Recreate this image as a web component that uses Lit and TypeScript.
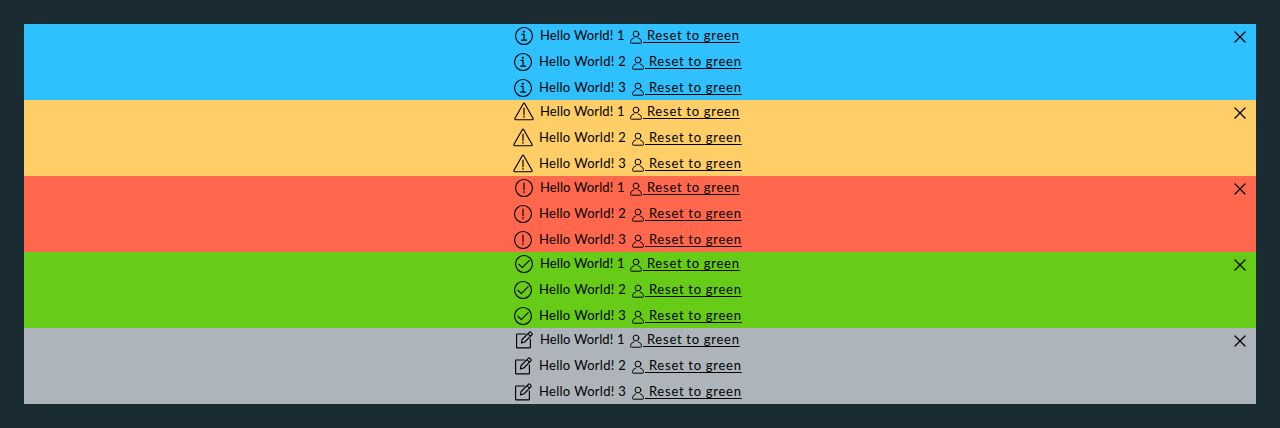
import { LitElement, html, css, svg } from "lit";
import { customElement } from "lit/decorators.js";

const shapes: Record<string, unknown> = {
  info: svg`<circle cx="10" cy="10" r="8.5"/><path d="M8 8.4h2.1v5.7M7.6 14.1h5" /><circle cx="9.8" cy="5.7" r=".75" fill="currentColor" stroke-width=".6"/>`,
  warning: svg`<path d="M9.4 1.5 1 16.2q-.7 1.5.9 1.5h16.2q1.6 0 .9-1.5L10.6 1.5q-.6-.8-1.2 0Z"/><path d="M10 6.1v6.6M10 14.2v1"/>`,
  danger: svg`<circle cx="10" cy="10" r="8.5"/><path d="M10 5v6.8M10 13.6v1"/>`,
  success: svg`<circle cx="10" cy="10" r="8.5"/><path d="m4.8 10.1 3.5 3.5 6.9-6.9"/>`,
  note: svg`<path d="M11.4 4H3.2q-.6 0-.6.6v12.6q0 .6.6.6h12.6q.6 0 .6-.6V9"/><path d="m7.4 12.9.7-3.4 7.2-7.2q.8-.8 1.6 0l1 1q.8.8 0 1.6L10.8 12l-3.4.9ZM14 3.7l2.5 2.5"/>`,
};

@customElement("app-root")
export class AppRoot extends LitElement {
  static styles = css`
    :host {
      display: block;
      box-sizing: border-box;
      height: 428px;
      padding: 24px;
      background: #1b2b32;
      color: #000;
      font: 13px/22px Lato, sans-serif;
      overflow: hidden;
    }
    .banner {
      display: grid;
      grid-template-columns: 32px 1fr 32px;
      height: 76px;
    }
    .info { background: #2ec0ff; }
    .warning { background: #ffce66; }
    .danger { background: #ff684c; }
    .success { background: #67cc17; }
    .note { background: #adb5bb; }
    .list {
      grid-column: 2;
      display: flex;
      flex-direction: column;
      align-items: center;
      gap: 2px;
      padding-right: 24px;
    }
    .row {
      display: flex;
      box-sizing: border-box;
      width: 230px;
      height: 24px;
      white-space: pre;
    }
    .row:first-child { width: 228px; }
    svg {
      fill: none;
      stroke: currentColor;
      stroke-linecap: round;
      stroke-linejoin: round;
      flex: none;
    }
    .status { width: 20px; height: 20px; margin: 2px 6px 0 0; stroke-width: 1.15; }
    .message { width: 92px; letter-spacing: 0.28px; word-spacing: 0.2px; }
    .row:first-child .message { width: 89px; letter-spacing: 0.1px; }
    .user { width: 14px; height: 14px; margin: 6px 0 0; stroke-width: 1; }
    .link {
      letter-spacing: 0.76px;
      word-spacing: -0.2px;
      color: inherit;
      text-decoration: underline;
      text-underline-offset: 2px;
      text-decoration-thickness: 1px;
    }
    .close {
      grid-column: 3;
      width: 32px;
      height: 26px;
      padding: 0;
      border: 0;
      background: none;
      color: inherit;
    }
    .close svg { display: block; width: 14px; height: 14px; margin: 0 9px; stroke-width: 1.3; }
  `;

  private banner(kind: string) {
    return html`<section class="banner ${kind}">
      <div class="list">
        ${[1, 2, 3].map(
          (n) => html`<div class="row"><svg class="status" viewBox="0 0 20 20">${shapes[kind]}</svg><span class="message">Hello World! ${n}</span><svg class="user" viewBox="0 0 14 14"><circle cx="7" cy="4" r="2.9"/><path d="M4.9 7.8Q1.5 9 1.5 11.7v.7q0 .8.8.8h9.4q.8 0 .8-.8v-.7q0-2.7-3.4-3.9"/></svg><a class="link"> Reset to green</a></div>`
        )}
      </div>
      <button class="close" aria-label="Close"><svg viewBox="0 0 14 14"><path d="m2 2 10 10M12 2 2 12"/></svg></button>
    </section>`;
  }

  render() {
    return Object.keys(shapes).map((kind) => this.banner(kind));
  }
}
